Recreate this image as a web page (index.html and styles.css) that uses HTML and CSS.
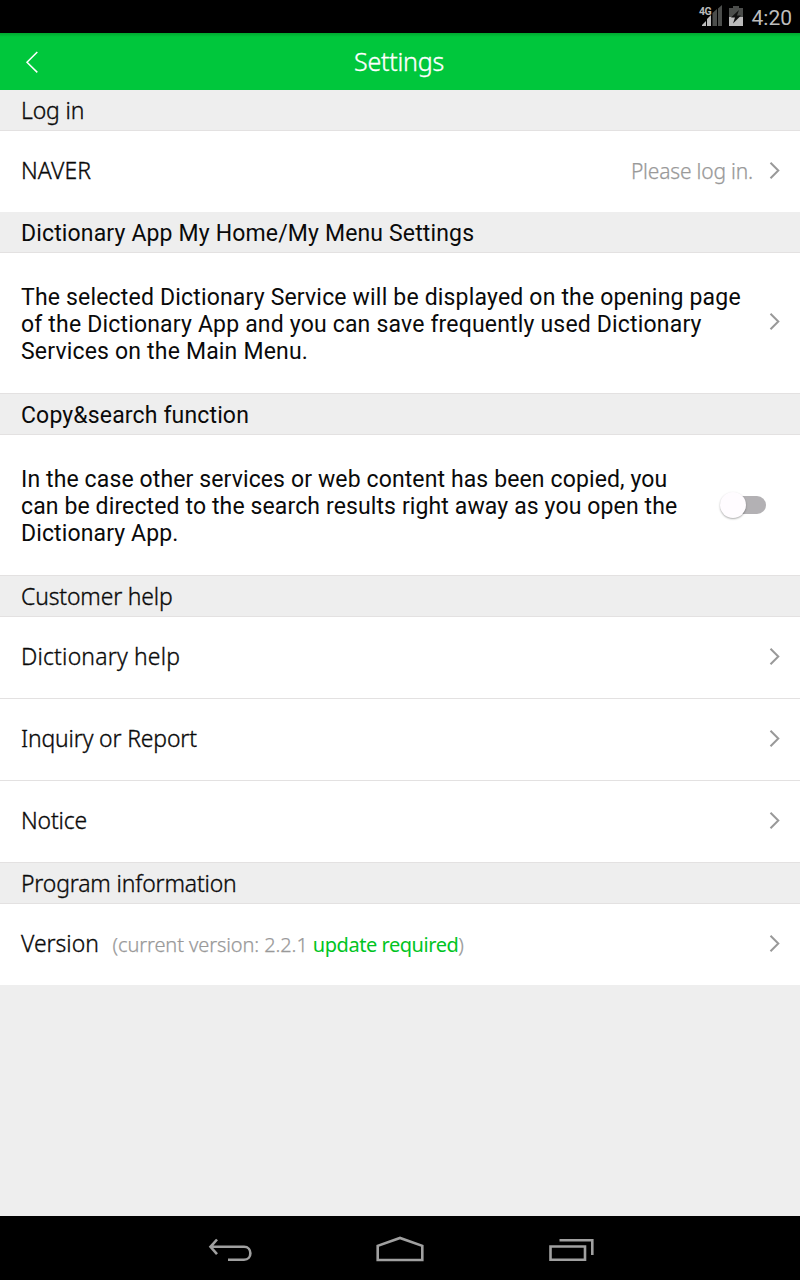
FILE: index.html
```html
<!DOCTYPE html>
<html lang="en">
<head>
<meta charset="utf-8">
<title>Settings</title>
<link rel="stylesheet" href="styles.css">
</head>
<body>
<svg class="defs" width="0" height="0"><symbol id="chevron" viewBox="0 0 12 20"><path d="M1.500 1.700 9.300 9.500l-7.800 7.800" fill="none" stroke="#999" stroke-width="2"/></symbol></svg>
<div class="screen">
  <div class="status">
    <svg class="signals" width="52" height="33" viewBox="0 0 52 33">
      <text x="3" y="15" class="net">4G</text>
      <path d="M6 26v-1l4-4v5z" fill="#bbb"/><path d="M11 26v-7l4-4v11z" fill="#bbb"/>
      <path d="M16.500 26V13l4.500-4v17zM22 26V8.500L26 5v21z" fill="#4b4d4b"/>
      <path d="M33 8h4V6h6v2h4v9H33z" fill="#4b4d4b"/><path d="M33 17h14v9H33z" fill="#bbb"/>
      <path d="M43 10l-8 7.500h4l-2 6 8-8h-4z" fill="#111"/>
    </svg>
    <span class="clock">4:20</span>
  </div>
  <header class="bar">
    <svg class="back" width="14" height="24" viewBox="0 0 14 24"><path d="M13.300 2 3 12.200 13.300 22.400" fill="none" stroke="#fff" stroke-width="1.500"/></svg>
    <h1 class="title">Settings</h1>
  </header>
  <main class="list">
    <h2 class="head first"><span class="narrow">Log in</span></h2>
    <div class="row"><span class="label narrow t-naver">NAVER</span><span class="hint">Please log in.</span><svg class="chev"><use href="#chevron"/></svg></div>
    <h2 class="head first roboto">Dictionary App My Home/My Menu Settings</h2>
    <div class="row tall"><p class="desc desc-home">The selected Dictionary Service will be displayed on the opening page<br>of the Dictionary App and you can save frequently used Dictionary<br>Services on the Main Menu.</p><svg class="chev"><use href="#chevron"/></svg></div>
    <h2 class="head roboto">Copy&amp;search function</h2>
    <div class="row tall"><p class="desc">In the case other services or web content has been copied, you<br>can be directed to the search results right away as you open the<br>Dictionary App.</p><span class="switch"><span class="thumb"></span></span></div>
    <h2 class="head"><span class="narrow">Customer help</span></h2>
    <div class="row"><span class="label narrow t-dict">Dictionary help</span><svg class="chev"><use href="#chevron"/></svg></div>
    <div class="row line"><span class="label narrow">Inquiry or Report</span><svg class="chev"><use href="#chevron"/></svg></div>
    <div class="row line"><span class="label narrow">Notice</span><svg class="chev"><use href="#chevron"/></svg></div>
    <h2 class="head"><span class="narrow">Program information</span></h2>
    <div class="row"><span class="label narrow t-version">Version</span><span class="version">(current version: 2.2.1 <b>update required</b>)</span><svg class="chev"><use href="#chevron"/></svg></div>
  </main>
  <nav class="nav">
    <svg width="400" height="64" viewBox="200 1216 400 64" fill="none" stroke="#a0a0a0" stroke-width="2.600">
      <path d="M217 1239.500l-6.500 7.300 6.500 7.300M210.500 1246.800h33.500c8.500 0 8.500 13 0 13h-16"/>
      <path d="M377.700 1260v-14.200L400 1238l22.300 7.800V1260z"/>
      <path d="M550.500 1246.500h34.500v13.300h-34.500zM559.500 1240.200h32.800v14.800"/>
    </svg>
  </nav>
</div>
</body>
</html>
```
FILE: styles.css
```css
body { margin: 0; background: #eee; }
.defs { position: absolute; }
.screen { width: 800px; height: 1280px; display: flex; flex-direction: column; font-family: "Noto Sans", sans-serif; color: #0a0a0a; }
.status { height: 33px; background: #000; display: flex; justify-content: flex-end; align-items: center; }
.signals { margin-right: 4px; }
.net { font: 700 10.500px Roboto, sans-serif; fill: #bbb; letter-spacing: -0.600px; }
.clock { font: 400 21px/33px Roboto, sans-serif; color: #bdbdbd; margin: 3px 8px 0 0; }
.bar { height: 57px; background: linear-gradient(#00a82f, #00c73c 4px); display: grid; grid-template-columns: 60px 1fr 60px; align-items: center; color: #fff; }
.back { margin-left: 24px; }
.title { margin: 0 2px 0 0; text-align: center; font-size: 25px; font-weight: 300; line-height: 55px; letter-spacing: -0.250px; -webkit-text-stroke: 0.350px; }
.list { flex: 1; }
.head { box-sizing: border-box; height: 42px; margin: 0; padding-left: 21px; border-top: 1px solid #e3e1e1; border-bottom: 1px solid #e3e1e1; background: #eee; font-size: 24px; font-weight: 300; line-height: 39px; white-space: nowrap; }
.first { height: 41px; border-top: 0; }
.narrow { display: inline-block; letter-spacing: -0.150px; transform: scaleX(0.955); transform-origin: left; -webkit-text-stroke: 0.350px; }
.roboto { font-family: Roboto, sans-serif; font-size: 23px; font-weight: 400; line-height: 43px; letter-spacing: 0.150px; }
.row { height: 81px; padding: 0 19px 0 21px; background: #fff; display: flex; align-items: center; white-space: nowrap; }
.line { border-top: 1px solid #e3e1e1; }
.tall { height: 140px; }
.label { margin-bottom: 3px; font-size: 24px; font-weight: 300; line-height: 32px; }
.t-naver { letter-spacing: 0.150px; }
.t-dict { letter-spacing: 0.200px; }
.t-version { letter-spacing: 0; }
.desc { margin: 2px 0 0; font: 400 23px/27px Roboto, sans-serif; letter-spacing: 0.120px; }
.desc-home { letter-spacing: 0.180px; }
.hint { margin: 0 0 2px auto; font-size: 21px; font-weight: 300; color: #999; letter-spacing: -0.200px; -webkit-text-stroke: 0.250px; }
.chev { width: 12px; height: 20px; margin: 0 0 2px auto; flex: none; }
.hint + .chev { margin-left: 16px; }
.version { font-size: 20px; margin-left: 10px; color: #999; font-weight: 300; letter-spacing: -0.100px; -webkit-text-stroke: 0.250px; }
.version b { color: #00c41f; font-weight: 400; letter-spacing: -0.450px; -webkit-text-stroke: 0; }
.switch { width: 40px; height: 18px; border-radius: 9px; background: #b3b1b4; margin-left: auto; margin-right: 15px; display: flex; align-items: center; }
.thumb { width: 26px; height: 26px; flex: none; margin-left: -6px; border-radius: 50%; background: #fffcff; box-shadow: 0 1px 2px #0005; }
.nav { height: 64px; background: #000; display: flex; justify-content: center; }
```
